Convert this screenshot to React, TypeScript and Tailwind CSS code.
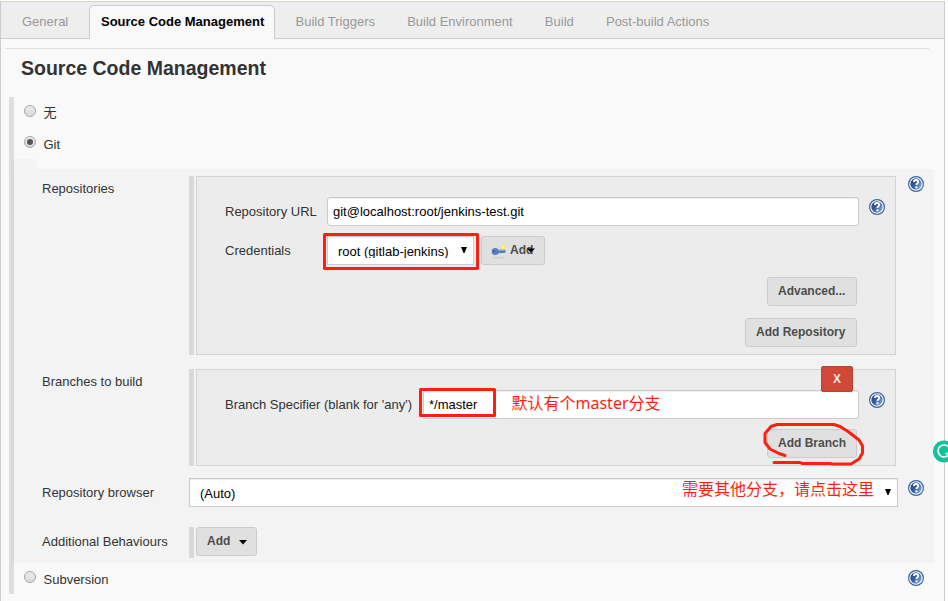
import React from "react";

function HelpIcon({ className = "" }: { className?: string }) {
  return (
    <svg viewBox="0 0 16 16" className={`h-4 w-4 shrink-0 ${className}`}>
      <defs>
        <linearGradient id="help-fill" x1="0" y1="0.2" x2="1" y2="0.8">
          <stop offset="0" stopColor="#1f4685" />
          <stop offset="0.5" stopColor="#3c66a5" />
          <stop offset="1" stopColor="#8fb0dc" />
        </linearGradient>
      </defs>
      <circle cx="8" cy="8" r="7.4" fill="#fff" stroke="#3c639c" strokeWidth="1.2" />
      <circle cx="8" cy="8" r="5.7" fill="url(#help-fill)" />
      <path d="M5.9 6.1C5.9 4.7 6.8 4 8.1 4s2.1.7 2.1 1.9c0 1.5-1.8 1.6-1.8 3.1" fill="none" stroke="#fff" strokeWidth="1.8" />
      <rect x="7.4" y="10.3" width="2" height="2" fill="#fff" />
    </svg>
  );
}

function Radio({ checked = false }: { checked?: boolean }) {
  return (
    <span className="mt-2 flex h-3 w-3 shrink-0 items-center justify-center rounded-full border border-[#a6a6a6] bg-linear-to-b from-[#ededed] to-[#d9d9d9]">
      {checked && <span className="h-1.5 w-1.5 rounded-full bg-[#555]" />}
    </span>
  );
}

function ScmOption({ label, checked, help, labelClass = "mt-[9px]" }: {
  label: string;
  checked?: boolean;
  help?: boolean;
  labelClass?: string;
}) {
  return (
    <div className="flex h-[31px] w-[910px] items-start pl-[10px]">
      <Radio checked={checked} />
      <span className={`ml-[7.5px] grow ${labelClass}`}>{label}</span>
      {help && <HelpIcon className="mt-[7px]" />}
    </div>
  );
}

function Button({ children, className = "" }: { children: React.ReactNode; className?: string }) {
  return (
    <button
      className={`flex h-[29px] shrink-0 items-start rounded-[3px] border border-[#ccc] bg-[#e0e0e0] px-[10px] pt-[6px] text-xs leading-[14px] font-bold whitespace-nowrap text-[#4d4d4d] ${className}`}
    >
      {children}
    </button>
  );
}

function Row({ label, labelTop, help, className = "", children }: {
  label: string;
  labelTop: string;
  help?: string;
  className?: string;
  children: React.ReactNode;
}) {
  return (
    <div className={`flex w-[913px] items-start pl-[31px] ${className}`}>
      <span className={`w-[147px] shrink-0 ${labelTop}`}>{label}</span>
      <div className="flex grow items-start">{children}</div>
      {help && <HelpIcon className={help} />}
    </div>
  );
}

function Chunk({ className = "", children }: { className?: string; children: React.ReactNode }) {
  return (
    <div className={`flex gap-0.5 ${className}`}>
      <div className="w-[5px] bg-[#d9d9d9]" />
      <div className="relative w-[700px] border border-[#d3d3d3] bg-[#ececec] pt-5 pl-7">{children}</div>
    </div>
  );
}

const fieldClass =
  "h-[29px] border border-[#ccc] bg-white text-black shadow-[inset_0_1px_1px_rgba(0,0,0,0.075)]";

const tabs = ["Build Triggers", "Build Environment", "Build", "Post-build Actions"];

export default function App() {
  return (
    <div
      lang="zh-CN"
      className="relative h-[601px] w-[948px] overflow-hidden bg-white pt-px font-['Liberation_Sans','Noto_Sans_CJK_SC',sans-serif] text-[13px] leading-[15px] text-[#333]"
    >
      <div className="h-[600px] w-[945px] border-x border-t border-x-[#ccc] border-t-[#d5d5ca] bg-[#f9f9f9]">
        <nav className="flex h-[37px] border-b border-[#ccc] bg-[#eee] text-[#999]">
          <span className="w-[88px] pt-3 pl-[21px]">General</span>
          <span className="mt-[3px] h-[34px] w-[186px] rounded-t-[5px] border border-b-0 border-[#ccc] bg-[#f9f9f9] pt-2 pl-[11px] font-bold whitespace-nowrap text-black">
            Source Code Management
          </span>
          <div className="flex gap-[32.2px] pt-3 pl-[20.5px] whitespace-nowrap">
            {tabs.map((t) => (
              <span key={t}>{t}</span>
            ))}
          </div>
        </nav>

        <div className="mt-[9px] ml-[5px] h-px w-[923px] bg-[#ddd]" />
        <h2 className="mt-2 ml-5 text-[19.5px] leading-[22px] font-bold">Source Code Management</h2>

        <div className="mt-[18px] ml-2 h-[497px] border-l-[5px] border-[#dedede]">
          <ScmOption label="无" labelClass="mt-2" />
          <ScmOption label="Git" checked />

          <div className="-ml-[3px] h-[10px] w-[26px] bg-black/[0.02]" />
          <section className="-ml-[3px] h-[394px] w-[923px] bg-black/[0.024] pt-[7px]">
            <Row label="Repositories" labelTop="mt-[5px]" help="mt-0" className="h-[179px]">
              <Chunk className="h-[179px]">
                <div className="flex items-start">
                  <span className="mt-[7px] w-[102px]">Repository URL</span>
                  <div className={`${fieldClass} w-[532px] rounded-[3px] pt-1.5 pl-[5px]`}>
                    git@localhost:root/jenkins-test.git
                  </div>
                  <HelpIcon className="mt-0.5 ml-[10px]" />
                </div>
                <div className="mt-[10px] flex items-start">
                  <span className="mt-[7px] w-[102px]">Credentials</span>
                  <div className={`${fieldClass} flex w-[147px] items-start justify-between pl-[10px]`}>
                    <span className="mt-[7px] h-[14px] overflow-hidden">root (gitlab-jenkins)</span>
                    <svg viewBox="0 0 6 6" className="mt-[10px] mr-[6px] h-1.5 w-1.5">
                      <path d="M0 0h6L3.5 6h-1z" fill="#000" />
                    </svg>
                  </div>
                  <Button className="relative ml-[7px] w-[64px]">
                    <svg viewBox="0 0 16 16" className="mt-px -ml-px h-4 w-4">
                      <ellipse cx="7.5" cy="13.8" rx="6" ry="0.8" fill="#cbcbcb" />
                      <circle cx="4.2" cy="7.4" r="3.5" fill="#5283bf" />
                      <path d="M6 5.8h8.5v2.4l-1 .9h-1.2l-.6-.7-.9.9H9.5l-.7-.7-.8.9H6z" fill="#4f80bd" />
                      <path d="M7 6.4h6.8" stroke="#86abd9" strokeWidth=".8" />
                      <circle cx="2.8" cy="7.4" r=".9" fill="#30588c" />
                      <circle cx="12.4" cy="3.3" r="2.4" fill="#f3ec4c" />
                      <circle cx="12.4" cy="3.3" r="1" fill="#fdfbb0" />
                    </svg>
                    <span className="ml-[3px]">Add</span>
                    <svg viewBox="0 0 8 5" className="absolute top-[11px] left-[45px] h-[5px] w-2">
                      <path d="M0 .5h8L4 4.5z" fill="#000" />
                    </svg>
                  </Button>
                </div>
                <div className="mt-3 flex w-[632px] flex-col items-end gap-3">
                  <Button className="w-[90px]">Advanced...</Button>
                  <Button className="w-[112px]">Add Repository</Button>
                </div>
              </Chunk>
            </Row>

            <Row label="Branches to build" labelTop="mt-[5px]" className="mt-[14px] h-[97px]">
              <Chunk className="h-[97px]">
                <div className="flex items-start">
                  <span className="mt-[7px] w-[198px] whitespace-nowrap">Branch Specifier (blank for 'any')</span>
                  <div className={`${fieldClass} w-[436px] rounded-[3px] pt-1.5 pl-[5px]`}>*/master</div>
                  <HelpIcon className="mt-0.5 ml-[10px]" />
                </div>
                <div className="mt-[10px] flex w-[632px] justify-end">
                  <Button className="w-[90px]">Add Branch</Button>
                </div>
                <button className="absolute -top-1 left-[624px] h-[26px] w-8 rounded-[2px] border border-[#b84333] bg-[#d14836] pb-px text-xs leading-[14px] font-bold text-[#f3e9e7]">
                  X
                </button>
              </Chunk>
            </Row>

            <Row label="Repository browser" labelTop="mt-[7px]" help="mt-0.5" className="mt-3 h-[29px]">
              <div className={`${fieldClass} flex w-[709px] items-start justify-between pl-[10px]`}>
                <span className="mt-[7px]">(Auto)</span>
                <svg viewBox="0 0 6 6" className="mt-[10px] mr-[6px] h-1.5 w-1.5">
                  <path d="M0 0h6L3.5 6h-1z" fill="#000" />
                </svg>
              </div>
            </Row>

            <Row label="Additional Behaviours" labelTop="mt-[7px]" className="mt-5 h-[31px]">
              <div className="mr-0.5 h-[31px] w-[5px] bg-[#d9d9d9]" />
              <Button className="w-[61px] justify-between pr-[9px]">
                <span>Add</span>
                <svg viewBox="0 0 8 5" className="mt-[6px] h-[5px] w-2">
                  <path d="M0 0h8L4 4.5z" fill="#000" />
                </svg>
              </Button>
            </Row>
          </section>

          <ScmOption label="Subversion" help />
        </div>
      </div>

      <svg viewBox="0 0 948 601" className="pointer-events-none absolute inset-0 h-[601px] w-[948px]">
        <g fill="none" stroke="#ff1f10" strokeWidth="3" strokeLinejoin="round" strokeLinecap="round">
          <rect x="324.5" y="234.5" width="153" height="34" />
          <rect x="420.5" y="389.5" width="74" height="26" />
          <path d="M785 455.5L779 453.5L770 449L765 442.5V433.5L771 426.5L777 424.5H834L840 426.5L848 431.5L859 440L862.5 446V453L859 459L851 464H832L831 463.5H802L800 462.5H774" />
        </g>
        <circle cx="944" cy="451.5" r="11" fill="#15c39a" />
        <path d="M949 447.5a6 6 0 1 0 0.5 6h-4" fill="none" stroke="#fff" strokeWidth="1.6" />
      </svg>
      <span className="absolute top-[391px] left-[511.5px] font-['Noto_Sans','Noto_Sans_CJK_SC',sans-serif] text-base leading-6 whitespace-nowrap text-[#ff1f10]">
        默认有个master分支
      </span>
      <span className="absolute top-[476px] left-[682px] font-['Noto_Sans_CJK_SC',sans-serif] text-base leading-6 whitespace-nowrap text-[#ff1f10]">
        需要其他分支，请点击这里
      </span>
    </div>
  );
}
